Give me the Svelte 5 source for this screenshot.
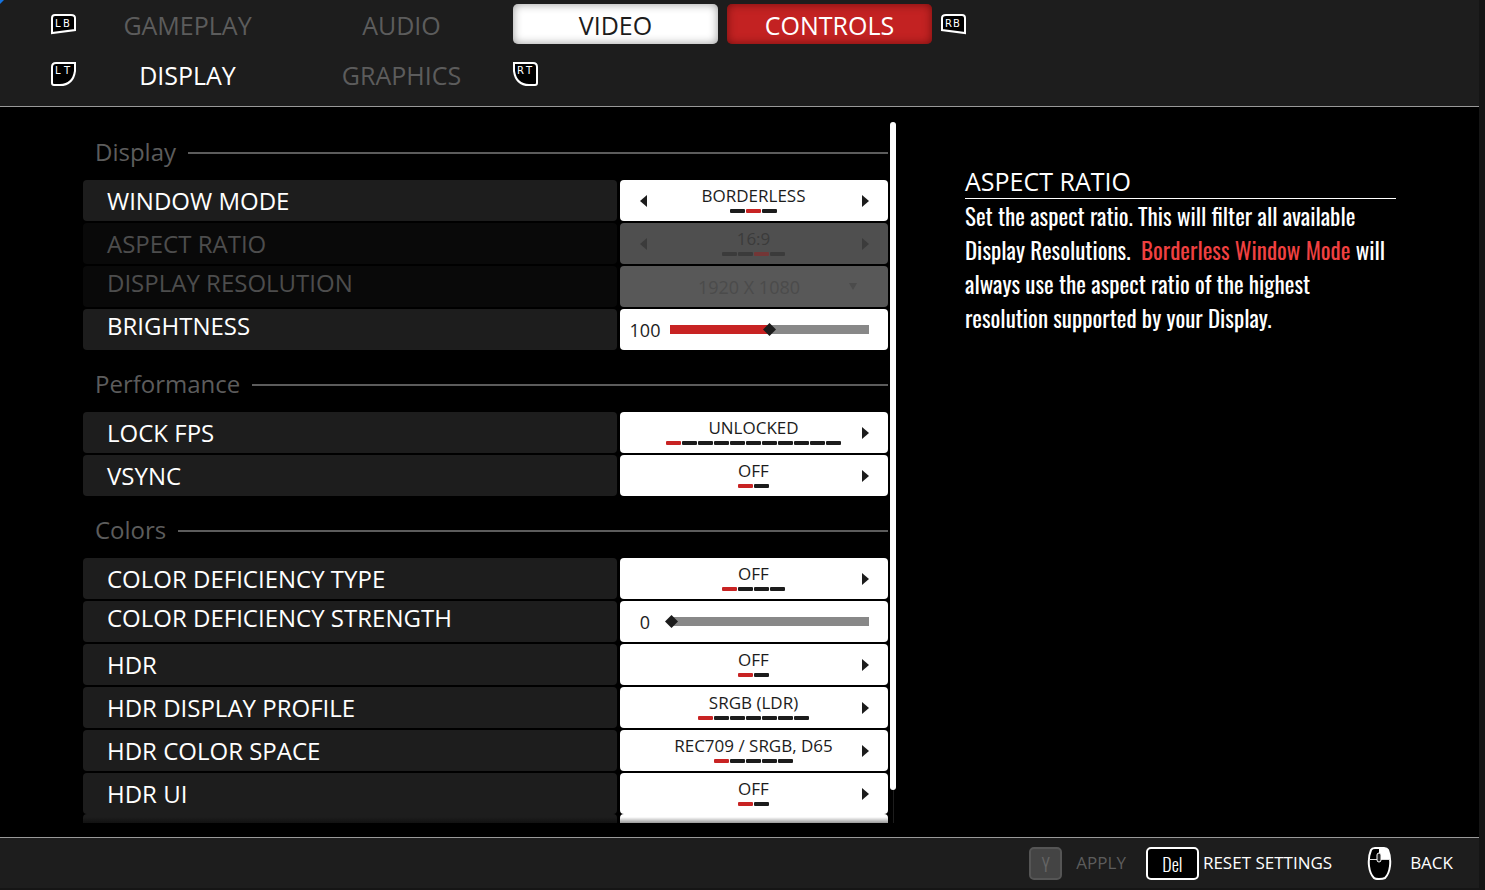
<script lang="ts">
  interface Choice {
    kind: "choice";
    label: string;
    value: string;
    count: number;
    index: number;
    disabled?: boolean;
  }

  interface Slider {
    kind: "slider";
    label: string;
    value: number;
    max: number;
  }

  interface Dropdown {
    kind: "dropdown";
    label: string;
    value: string;
    disabled?: boolean;
  }

  interface Section {
    title: string;
    rows: (Choice | Slider | Dropdown)[];
  }

  const sections: Section[] = $state([
    {
      title: "Display",
      rows: [
        { kind: "choice", label: "WINDOW MODE", value: "BORDERLESS", count: 3, index: 1 },
        { kind: "choice", label: "ASPECT RATIO", value: "16:9", count: 4, index: 2, disabled: true },
        { kind: "dropdown", label: "DISPLAY RESOLUTION", value: "1920 X 1080", disabled: true },
        { kind: "slider", label: "BRIGHTNESS", value: 100, max: 200 },
      ],
    },
    {
      title: "Performance",
      rows: [
        { kind: "choice", label: "LOCK FPS", value: "UNLOCKED", count: 11, index: 0 },
        { kind: "choice", label: "VSYNC", value: "OFF", count: 2, index: 0 },
      ],
    },
    {
      title: "Colors",
      rows: [
        { kind: "choice", label: "COLOR DEFICIENCY TYPE", value: "OFF", count: 4, index: 0 },
        { kind: "slider", label: "COLOR DEFICIENCY STRENGTH", value: 0, max: 100 },
        { kind: "choice", label: "HDR", value: "OFF", count: 2, index: 0 },
        { kind: "choice", label: "HDR DISPLAY PROFILE", value: "SRGB (LDR)", count: 7, index: 0 },
        { kind: "choice", label: "HDR COLOR SPACE", value: "REC709 / SRGB, D65", count: 5, index: 0 },
        { kind: "choice", label: "HDR UI", value: "OFF", count: 2, index: 0 },
      ],
    },
  ]);

  const tabs = [
    { name: "GAMEPLAY", state: "" },
    { name: "AUDIO", state: "" },
    { name: "VIDEO", state: "active" },
    { name: "CONTROLS", state: "hot" },
  ];

  const subTabs = [
    { name: "DISPLAY", state: "current" },
    { name: "GRAPHICS", state: "" },
  ];

  function slug(label: string): string {
    return label.toLowerCase().replaceAll(" ", "-");
  }
</script>

{#snippet bumper(side: string)}
  <svg class="pad" width="25" height="24" viewBox="0 0 25 24" aria-hidden="true">
    {#if side === "L"}
      <path d="M1 6 Q1 3 4 3 H20 Q24 3 24 6 V18 L1 21 Z" />
    {:else}
      <path d="M24 6 Q24 3 21 3 H5 Q1 3 1 6 V18 L24 21 Z" />
    {/if}
    <text x="4 12" y="15">{side}B</text>
  </svg>
{/snippet}

{#snippet trigger(side: string)}
  <svg class="pad" width="25" height="24" viewBox="0 0 25 24" aria-hidden="true">
    {#if side === "L"}
      <path d="M5 1 H24 V9 Q22 23 9 23 H3 Q1 23 1 21 V5 Q1 1 5 1 Z" />
    {:else}
      <path d="M20 1 H1 V9 Q3 23 16 23 H22 Q24 23 24 21 V5 Q24 1 20 1 Z" />
    {/if}
    <text x="4 13" y="12">{side}T</text>
  </svg>
{/snippet}

<div class="page">
  <header>
    <nav class="tabs">
      {@render bumper("L")}
      <div class="tab-list">
        {#each tabs as tab}
          <button class="tab {tab.state}">{tab.name}</button>
        {/each}
      </div>
      {@render bumper("R")}
    </nav>
    <nav class="tabs">
      {@render trigger("L")}
      <div class="tab-list">
        {#each subTabs as tab}
          <button class="tab {tab.state}">{tab.name}</button>
        {/each}
      </div>
      {@render trigger("R")}
    </nav>
  </header>

  <main>
    <div class="scroll-area">
      <div class="settings">
        {#each sections as section}
          <section>
            <h2><span>{section.title}</span></h2>
            {#each section.rows as row}
              <div class="row {row.kind}" class:disabled={"disabled" in row && row.disabled}>
                {#if row.kind === "choice"}
                  <span class="label" id={slug(row.label)}>{row.label}</span>
                  <div class="control" role="group" aria-labelledby={slug(row.label)}>
                    <button
                      class="arrow"
                      class:hidden={row.index === 0}
                      disabled={row.disabled}
                      aria-label="Previous"
                      onclick={() => row.index--}
                    >
                      <svg width="7" height="12" viewBox="0 0 7 12"><path d="M7 0 V12 L0 6 Z" /></svg>
                    </button>
                    <div class="choice-value">
                      <span>{row.value}</span>
                      <div class="pips">
                        {#each { length: row.count } as _, i}
                          <i class:on={i === row.index}></i>
                        {/each}
                      </div>
                    </div>
                    <button
                      class="arrow"
                      class:hidden={row.index === row.count - 1}
                      disabled={row.disabled}
                      aria-label="Next"
                      onclick={() => row.index++}
                    >
                      <svg width="7" height="12" viewBox="0 0 7 12"><path d="M0 0 V12 L7 6 Z" /></svg>
                    </button>
                  </div>
                {:else if row.kind === "slider"}
                  <label class="label" for={slug(row.label)}>{row.label}</label>
                  <div class="control">
                    <output for={slug(row.label)}>{row.value}</output>
                    <input
                      id={slug(row.label)}
                      type="range"
                      min="0"
                      max={row.max}
                      bind:value={row.value}
                      style="--fill: {(row.value / row.max) * 100}%"
                    />
                  </div>
                {:else}
                  <label class="label" for={slug(row.label)}>{row.label}</label>
                  <div class="control">
                    <select id={slug(row.label)} disabled={row.disabled}>
                      <option>{row.value}</option>
                    </select>
                    <svg class="caret" width="8" height="7" viewBox="0 0 8 7"><path d="M0 0 H8 L4 7 Z" /></svg>
                  </div>
                {/if}
              </div>
            {/each}
          </section>
        {/each}
        <div class="row">
          <span class="label"></span>
          <div class="control"></div>
        </div>
      </div>
      <div class="scrollbar"><div class="thumb"></div></div>
    </div>

    <aside>
      <h1>ASPECT RATIO</h1>
      <p>
        Set the aspect ratio. This will filter all available<br />
        Display Resolutions.&nbsp; <em>Borderless Window Mode</em> will<br />
        always use the aspect ratio of the highest<br />
        resolution supported by your Display.
      </p>
    </aside>
  </main>

  <footer>
    <button class="action apply" disabled><kbd>Y</kbd><span>APPLY</span></button>
    <button class="action reset"><kbd>Del</kbd><span>RESET SETTINGS</span></button>
    <button class="action back">
      <svg width="25" height="33" viewBox="0 0 25 33" aria-hidden="true">
        <path
          d="M4 3 Q5 1 8 1 H17 Q20 1 21 3 Q24 10 23 19 Q22 27 18 31 Q16 32 12 32 Q8 32 7 31 Q3 27 2 19 Q1 10 4 3 Z"
          fill="#000"
          stroke="#fff"
          stroke-width="2"
        />
        <path d="M12 1 H18 Q21 2 22 6 L23 13 H12 Z" fill="#fff" />
        <path d="M2 12.5 H23" stroke="#ddd" stroke-width="1" />
        <rect x="10" y="6" width="4" height="9" rx="2" fill="#222" stroke="#fff" />
      </svg>
      <span>BACK</span>
    </button>
  </footer>
</div>

<style>
  :global(body) {
    background: #151515;
  }

  .page {
    box-sizing: border-box;
    height: 100vh;
    margin-right: 6px;
    display: flex;
    flex-direction: column;
    border-bottom: 2px solid #151515;
    background: #000;
    color: #fff;
    font-family: "Open Sans", "Noto Sans", sans-serif;
    font-size: 24px;
    position: relative;
  }

  .page::before {
    content: "";
    position: absolute;
    top: 0;
    left: 0;
    border-top: 4px solid #1473e0;
    border-right: 4px solid transparent;
  }

  button,
  select {
    font: inherit;
    color: inherit;
    background: none;
    border: none;
    padding: 0;
  }

  button {
    cursor: pointer;
  }

  header {
    display: flex;
    flex-direction: column;
    gap: 10px;
    padding: 4px 51px 12px;
    background: #1d1d1d;
    border-bottom: 1px solid #999;
  }

  .tabs {
    display: flex;
    align-items: center;
    gap: 9px;
  }

  .tab-list {
    display: flex;
    gap: 9px;
  }

  .pad {
    flex: none;
    fill: #000;
    stroke: #fff;
    stroke-width: 2;
  }

  .pad text {
    font: 10px "DejaVu Sans", sans-serif;
    fill: #fff;
    stroke: none;
  }

  .tab {
    width: 205px;
    height: 40px;
    padding-top: 2px;
    font-size: 25px;
    line-height: 38px;
    border-radius: 5px;
    color: #5c5c5c;
  }

  .tab.active {
    background: #fff;
    color: #1c1c1c;
    box-shadow: inset 0 0 10px rgba(0, 0, 0, 0.4);
  }

  .tab.hot {
    background: #c32222;
    color: #fff;
    box-shadow: inset 0 0 10px rgba(60, 0, 0, 0.6);
  }

  .tab.current {
    color: #fff;
  }

  main {
    flex: 1;
    min-height: 0;
    display: grid;
    grid-template-columns: minmax(0, 813fr) minmax(0, 431fr);
    grid-template-rows: minmax(0, 1fr);
    gap: 69px;
    padding: 11px 83px 14px;
  }

  .scroll-area {
    display: flex;
    gap: 2px;
    overflow: hidden;
  }

  .settings {
    flex: 1;
    min-width: 0;
    position: relative;
    overflow: hidden;
  }

  .settings::after {
    content: "";
    position: absolute;
    inset: auto 0 0;
    height: 6px;
    background: linear-gradient(transparent, rgba(0, 0, 0, 0.4));
  }

  h2 {
    display: flex;
    align-items: center;
    gap: 12px;
    margin: 0;
    padding: 8px 0 0 12px;
    height: 54px;
    font-size: 24px;
    font-weight: 400;
    color: #5c5c5c;
  }

  h2 span {
    padding-bottom: 4px;
  }

  h2::after {
    content: "";
    flex: 1;
    height: 2px;
    background: #5c5c5c;
  }

  .row {
    display: grid;
    grid-template-columns: minmax(0, 267fr) minmax(0, 134fr);
    gap: 3px;
    height: 41px;
    margin-bottom: 2px;
  }

  .row:last-child {
    margin-bottom: 0;
  }

  .label {
    padding: 2px 0 0 24px;
    line-height: 38px;
    background: #1d1d1d;
    border-radius: 4px;
    white-space: nowrap;
  }

  .slider .label,
  .dropdown .label {
    padding-top: 0;
    line-height: 34px;
  }

  .control {
    display: flex;
    align-items: center;
    position: relative;
    background: #fff;
    color: #1c1c1c;
    border-radius: 4px;
    font-size: 17px;
  }

  .arrow {
    width: 46px;
    height: 41px;
    display: flex;
    align-items: center;
    justify-content: center;
    fill: currentColor;
  }

  .arrow.hidden {
    visibility: hidden;
  }

  .choice-value {
    flex: 1;
    display: flex;
    flex-direction: column;
    align-items: center;
    gap: 1px;
    padding: 0 1px 4px 0;
    line-height: 24px;
    white-space: nowrap;
  }

  .pips {
    display: flex;
    gap: 1px;
  }

  .pips i {
    width: 15px;
    height: 4px;
    border-radius: 1px;
    background: #1c1c1c;
  }

  .pips i.on {
    background: #c82323;
  }

  .disabled .label {
    background: #090909;
    color: #4d4d4d;
  }

  .disabled .control {
    background: #4f4f4f;
    color: #3b3b3b;
  }

  .disabled .pips i {
    background: #3b3b3b;
  }

  .disabled .pips i.on {
    background: #733636;
  }

  .disabled.dropdown .control {
    background: #585858;
    color: #4b4b4b;
  }

  select {
    appearance: none;
    width: 100%;
    height: 41px;
    padding-right: 10px;
    font-size: 18px;
    text-align-last: center;
    opacity: 1;
  }

  .caret {
    position: absolute;
    right: 31px;
    fill: currentColor;
  }

  output {
    width: 50px;
    flex: none;
    text-align: center;
    font-size: 18px;
  }

  input[type="range"] {
    appearance: none;
    flex: 1;
    min-width: 0;
    height: 13px;
    margin: 0 14px 0 -5px;
    background: linear-gradient(to right, #c82323 var(--fill), #888 var(--fill)) no-repeat center / calc(100% - 10px) 9px;
  }

  input[type="range"]::-webkit-slider-thumb {
    appearance: none;
    width: 13px;
    height: 13px;
    background: #1c1c1c;
    clip-path: polygon(50% 0, 100% 50%, 50% 100%, 0 50%);
  }

  .scrollbar {
    width: 6px;
    margin-top: 4px;
    background: linear-gradient(#1d1d1d, #1d1d1d) no-repeat center / 1px 100%;
  }

  .thumb {
    height: calc(100% - 33px);
    border-radius: 3px;
    background: #fff;
  }

  aside {
    padding-top: 46px;
  }

  h1 {
    margin: 0;
    font-size: 25px;
    font-weight: 400;
    line-height: 34px;
    border-bottom: 1px solid #fff;
  }

  p {
    margin: 0;
    font-family: "Oswald", "Liberation Sans Narrow", "Liberation Sans", sans-serif;
    font-size: 23px;
    line-height: 34px;
    white-space: nowrap;
  }

  em {
    font-style: normal;
    color: #f04040;
  }

  footer {
    display: flex;
    justify-content: flex-end;
    align-items: center;
    height: 50px;
    padding-right: 26px;
    background: #1d1d1d;
    border-top: 1px solid #999;
    font-size: 17px;
  }

  .action {
    display: flex;
    align-items: center;
    white-space: nowrap;
  }

  .action span {
    padding-bottom: 2px;
  }

  kbd {
    box-sizing: border-box;
    height: 33px;
    border: 2px solid #fff;
    border-radius: 5px;
    background: #000;
    font-family: "Oswald", "Liberation Sans Narrow", "Liberation Sans", sans-serif;
    font-size: 18px;
    font-weight: 300;
    line-height: 30px;
  }

  .apply {
    gap: 14px;
    color: #5c5c5c;
  }

  .apply kbd {
    width: 33px;
    border-color: #555;
    background: #444;
    color: #666;
  }

  .reset {
    gap: 4px;
    margin-left: 20px;
  }

  .reset kbd {
    width: 53px;
  }

  .back {
    gap: 18px;
    margin-left: 35px;
  }
</style>
